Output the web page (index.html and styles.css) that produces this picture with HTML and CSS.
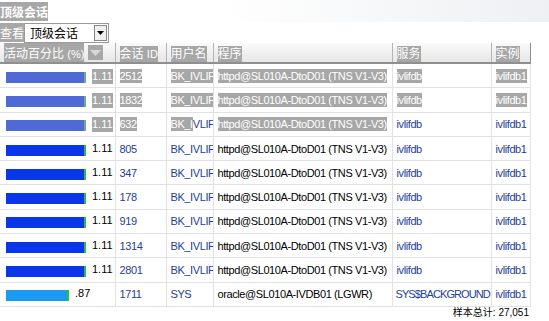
FILE: index.html
```html
<!DOCTYPE html>
<html>
<head>
<meta charset="utf-8">
<link rel="stylesheet" href="styles.css">
</head>
<body>
<div class="page">
  <div class="title"><span class="sel">顶级会话</span></div>
  <div class="view">
    <span class="sel">查看</span>
    <div class="select"><span class="sel-text">顶级会话</span><span class="sel-btn"><svg width="7" height="4" viewBox="0 0 7 4"><path d="M0 0H7L3.5 4Z" fill="#000"/></svg></span></div>
  </div>
  <table class="grid">
    <colgroup><col class="c1"><col class="c2"><col class="c3"><col class="c4"><col class="c5"><col class="c6"></colgroup>
    <thead>
      <tr>
        <th><div class="hcell"><span class="sel">活动百分比 <span class="lat">(%)</span></span><span class="sort"><svg width="11" height="6" viewBox="0 0 11 6"><path d="M0 0H11L5.5 6Z" fill="#d8d8d8"/></svg></span></div></th>
        <th><span class="sel">会话 <span class="lat">ID</span></span></th>
        <th><span class="sel">用户名</span></th>
        <th><span class="sel">程序</span></th>
        <th><span class="sel">服务</span></th>
        <th><span class="sel">实例</span></th>
      </tr>
    </thead>
    <tbody>
      <tr class="hl">
        <td><div class="act"><span class="bar fade" style="width:80px"></span><span class="val sel">1.11</span></div></td>
        <td><span class="sel">2512</span></td>
        <td><span class="sel">BK_IVLIF</span></td>
        <td><span class="sel">httpd@SL010A-DtoD01 (TNS V1-V3)</span></td>
        <td><span class="sel">ivlifdb</span></td>
        <td><span class="sel">ivlifdb1</span></td>
      </tr>
      <tr class="hl">
        <td><div class="act"><span class="bar fade" style="width:80px"></span><span class="val sel">1.11</span></div></td>
        <td><span class="sel">1832</span></td>
        <td><span class="sel">BK_IVLIF</span></td>
        <td><span class="sel">httpd@SL010A-DtoD01 (TNS V1-V3)</span></td>
        <td><span class="sel">ivlifdb</span></td>
        <td><span class="sel">ivlifdb1</span></td>
      </tr>
      <tr>
        <td><div class="act"><span class="bar fade" style="width:80px"></span><span class="val sel">1.11</span></div></td>
        <td><span class="sel">632</span></td>
        <td class="link"><span class="sel">BK_I</span>VLIF</td>
        <td><span class="sel">httpd@SL010A-DtoD01 (TNS V1-V3)</span></td>
        <td class="link">ivlifdb</td>
        <td class="link">ivlifdb1</td>
      </tr>
      <tr>
        <td><div class="act"><span class="bar" style="width:80px"></span><span class="val">1.11</span></div></td>
        <td class="link">805</td><td class="link">BK_IVLIF</td><td>httpd@SL010A-DtoD01 (TNS V1-V3)</td><td class="link">ivlifdb</td><td class="link">ivlifdb1</td>
      </tr>
      <tr>
        <td><div class="act"><span class="bar" style="width:80px"></span><span class="val">1.11</span></div></td>
        <td class="link">347</td><td class="link">BK_IVLIF</td><td>httpd@SL010A-DtoD01 (TNS V1-V3)</td><td class="link">ivlifdb</td><td class="link">ivlifdb1</td>
      </tr>
      <tr>
        <td><div class="act"><span class="bar" style="width:80px"></span><span class="val">1.11</span></div></td>
        <td class="link">178</td><td class="link">BK_IVLIF</td><td>httpd@SL010A-DtoD01 (TNS V1-V3)</td><td class="link">ivlifdb</td><td class="link">ivlifdb1</td>
      </tr>
      <tr>
        <td><div class="act"><span class="bar" style="width:80px"></span><span class="val">1.11</span></div></td>
        <td class="link">919</td><td class="link">BK_IVLIF</td><td>httpd@SL010A-DtoD01 (TNS V1-V3)</td><td class="link">ivlifdb</td><td class="link">ivlifdb1</td>
      </tr>
      <tr>
        <td><div class="act"><span class="bar" style="width:80px"></span><span class="val">1.11</span></div></td>
        <td class="link">1314</td><td class="link">BK_IVLIF</td><td>httpd@SL010A-DtoD01 (TNS V1-V3)</td><td class="link">ivlifdb</td><td class="link">ivlifdb1</td>
      </tr>
      <tr>
        <td><div class="act"><span class="bar" style="width:80px"></span><span class="val">1.11</span></div></td>
        <td class="link">2801</td><td class="link">BK_IVLIF</td><td>httpd@SL010A-DtoD01 (TNS V1-V3)</td><td class="link">ivlifdb</td><td class="link">ivlifdb1</td>
      </tr>
      <tr>
        <td><div class="act"><span class="bar light" style="width:63px"></span><span class="val">.87</span></div></td>
        <td class="link">1711</td><td class="link">SYS</td><td>oracle@SL010A-IVDB01 (LGWR)</td><td class="link tight">SYS$BACKGROUND</td><td class="link">ivlifdb1</td>
      </tr>
    </tbody>
  </table>
  <div class="total">样本总计: 27,051</div>
</div>
</body>
</html>
```

FILE: styles.css
```css
html, body {
  margin: 0;
  padding: 0;
  background: #fff;
}
.page {
  width: 549px;
  font-family: "Liberation Sans", "Noto Sans CJK SC", sans-serif;
  font-size: 12px;
  color: #000;
}
.sel {
  background: #a7a7a7;
  color: #fff;
}
.lat {
  font-size: 11px;
}
.title {
  height: 22px;
  display: flex;
  align-items: center;
  font-size: 12px;
  font-weight: bold;
  background: linear-gradient(to right, #fff 0%, #fff 40%, #eef0f3 100%);
}
.title .sel {
  padding: 1px 0;
}
.view {
  height: 21px;
  display: flex;
  align-items: center;
  font-size: 12px;
}
.view > .sel {
  padding: 1px 0;
}
.select {
  width: 83px;
  height: 18px;
  border: 1px solid #9a9a9a;
  background: #fff;
  display: flex;
  align-items: center;
  justify-content: space-between;
  box-sizing: content-box;
}
.sel-text {
  padding-left: 5px;
  font-size: 12px;
  color: #000;
}
.sel-btn {
  width: 13px;
  height: 16px;
  margin-right: 1px;
  border: 1px solid #888;
  background: #f0f0f0;
  display: flex;
  align-items: center;
  justify-content: center;
  box-sizing: border-box;
}
.grid {
  border-collapse: collapse;
  table-layout: fixed;
  width: 530px;
}
.c1 { width: 115px; }
.c2 { width: 51px; }
.c3 { width: 47px; }
.c4 { width: 179px; }
.c5 { width: 99px; }
.c6 { width: 39px; }
.grid th {
  height: 19px;
  padding: 0 0 0 4px;
  text-align: left;
  font-weight: normal;
  font-size: 12px;
  white-space: nowrap;
  overflow: hidden;
  background: linear-gradient(#fafafa, #e6e6e6);
  border-right: 1px solid #b4b4b4;
  border-bottom: 2px solid #8f8f8f;
}
.grid th:last-child {
  border-right: 1px solid #8f8f8f;
}
.grid th .sel {
  padding: 1px 0;
}
.hcell {
  display: flex;
  align-items: center;
}
.sort {
  margin-left: 4px;
  width: 15px;
  height: 15px;
  background: #a7a7a7;
  display: flex;
  align-items: center;
  justify-content: center;
}
.grid td {
  height: 23.3px;
  padding: 0 0 0 4px;
  font-size: 11px;
  letter-spacing: -0.4px;
  white-space: nowrap;
  overflow: hidden;
  text-overflow: clip;
  border-right: 1px solid #e2e2e2;
  border-bottom: 1px solid #e2e2e2;
  vertical-align: middle;
}
.grid td.tight {
  padding-left: 3px;
  letter-spacing: -0.9px;
}
.grid td .sel {
  padding: 1px 0;
}
.grid td:first-child {
  padding-left: 6px;
}
.link {
  color: #23409a;
}
.act {
  display: flex;
  align-items: flex-start;
  height: 14px;
}
.bar {
  display: block;
  height: 11px;
  margin-top: 3px;
  background: #0a36ea;
  border-right: 2px solid #2ec02e;
  box-sizing: border-box;
}
.bar.fade {
  background: #4f69d6;
  border-right-color: #6db36a;
}
.bar.light {
  background: #1a9bf0;
}
.val {
  margin-left: 6px;
  line-height: 13px;
  letter-spacing: 0;
}
.total {
  width: 529px;
  text-align: right;
  font-size: 10px;
  line-height: 12px;
  padding-top: 0;
}
```
